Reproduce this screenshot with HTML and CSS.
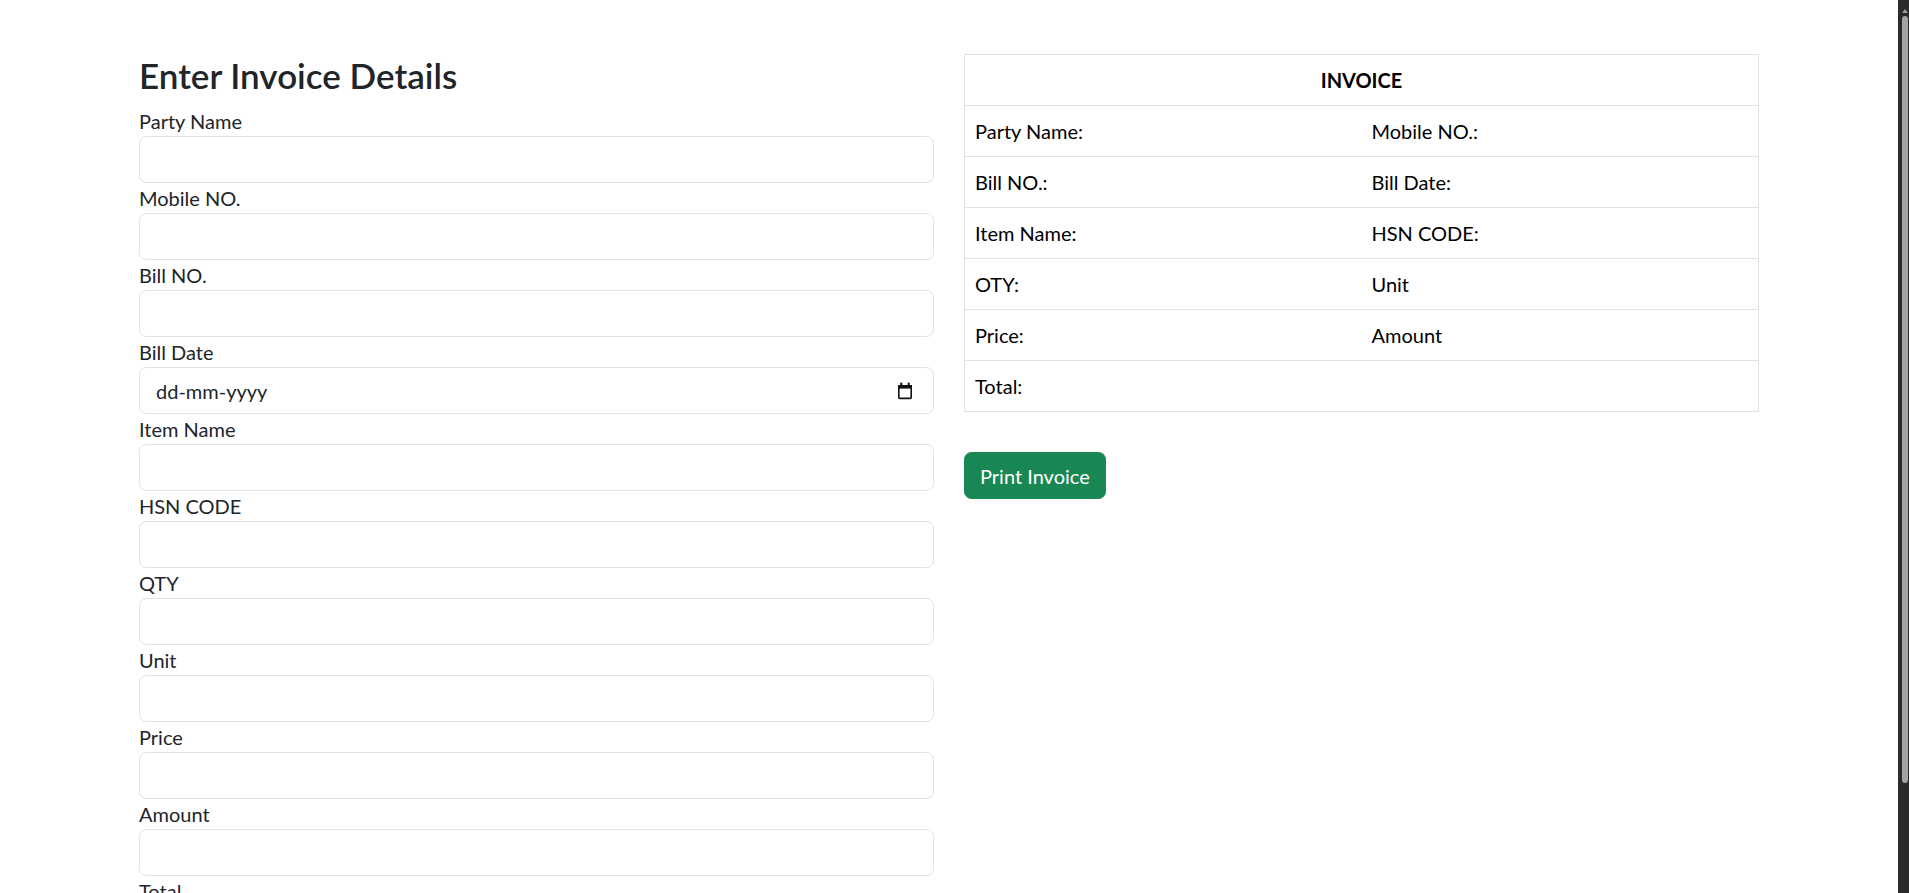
FILE: index.html
```html
<!DOCTYPE html>
<html lang="en">
<head>
<meta charset="utf-8">
<title>Invoice</title>
<link rel="stylesheet" href="styles.css">
</head>
<body>
<div class="viewport">
  <div class="page">
    <div class="row">
      <div class="col">
        <h3 class="title">Enter Invoice Details</h3>
        <form class="form">
          <label class="form-label">Party Name</label>
          <input class="form-control" type="text">
          <label class="form-label">Mobile NO.</label>
          <input class="form-control" type="text">
          <label class="form-label">Bill NO.</label>
          <input class="form-control" type="text">
          <label class="form-label">Bill Date</label>
          <div class="form-control date-control">
            <span class="date-text">dd-mm-yyyy</span>
            <svg class="cal-icon" width="16" height="18" viewBox="0 0 16 18">
              <rect x="1.8" y="3.8" width="12.4" height="12.6" rx="1" fill="none" stroke="#111" stroke-width="1.6"/>
              <rect x="1" y="3" width="14" height="3.6" fill="#111"/>
              <rect x="3.3" y="0.6" width="2" height="3" fill="#111"/>
              <rect x="10.7" y="0.6" width="2" height="3" fill="#111"/>
            </svg>
          </div>
          <label class="form-label">Item Name</label>
          <input class="form-control" type="text">
          <label class="form-label">HSN CODE</label>
          <input class="form-control" type="text">
          <label class="form-label">QTY</label>
          <input class="form-control" type="text">
          <label class="form-label">Unit</label>
          <input class="form-control" type="text">
          <label class="form-label">Price</label>
          <input class="form-control" type="text">
          <label class="form-label">Amount</label>
          <input class="form-control" type="text">
          <label class="form-label">Total</label>
          <input class="form-control" type="text">
        </form>
      </div>
      <div class="col">
        <table class="invoice">
          <thead>
            <tr><th colspan="2">INVOICE</th></tr>
          </thead>
          <tbody>
            <tr><td>Party Name:</td><td>Mobile NO.:</td></tr>
            <tr><td>Bill NO.:</td><td>Bill Date:</td></tr>
            <tr><td>Item Name:</td><td>HSN CODE:</td></tr>
            <tr><td>OTY:</td><td>Unit</td></tr>
            <tr><td>Price:</td><td>Amount</td></tr>
            <tr><td>Total:</td><td></td></tr>
          </tbody>
        </table>
        <button class="btn-print" type="button">Print Invoice</button>
      </div>
    </div>
  </div>
</div>
<div class="scrollbar">
  <div class="scroll-arrow"></div>
  <div class="scroll-thumb"></div>
</div>
</body>
</html>
```

FILE: styles.css
```css
html, body {
  margin: 0;
  padding: 0;
  height: 100%;
  overflow: hidden;
}

body {
  display: flex;
  font-family: "Lato", "Liberation Sans", sans-serif;
  font-size: 20px;
  line-height: 30px;
  color: #212529;
  background: #ffffff;
}

.viewport {
  flex: 1;
  min-width: 0;
  overflow: hidden;
}

.page {
  width: 1620px;
  margin: 0 auto;
  padding-top: 54px;
}

.row {
  display: grid;
  grid-template-columns: 795px 795px;
  column-gap: 30px;
  align-items: start;
}

.title {
  margin: 0 0 10px;
  font-size: 35px;
  line-height: 42px;
  font-weight: 600;
  color: #212529;
}

.form {
  display: flex;
  flex-direction: column;
}

.form-label {
  display: block;
  height: 30px;
  line-height: 30px;
}

.form-control {
  box-sizing: border-box;
  display: block;
  width: 100%;
  height: 47px;
  margin: 0;
  padding: 0 16px;
  border: 1px solid #dee2e6;
  border-radius: 7.5px;
  background: #fff;
  font: inherit;
  color: #212529;
  outline: none;
}

.date-control {
  display: flex;
  align-items: center;
  justify-content: space-between;
  padding-right: 20px;
}

.date-text {
  color: #212529;
}

.cal-icon {
  display: block;
}

.invoice {
  width: 100%;
  border-collapse: collapse;
  table-layout: fixed;
  border: 1px solid #dee2e6;
  color: #000;
}

.invoice th,
.invoice td {
  border: 1px solid #dee2e6;
  border-left: none;
  border-right: none;
  padding: 10px 10px;
  height: 30px;
  line-height: 30px;
  text-align: left;
  font-weight: 400;
}

.invoice th {
  text-align: center;
  font-weight: 700;
}

.btn-print {
  display: block;
  margin-top: 40px;
  height: 47px;
  padding: 0 15px;
  border: 1px solid #198754;
  border-radius: 7.5px;
  background: #198754;
  color: #fff;
  font: inherit;
  cursor: pointer;
}

.scrollbar {
  width: 11px;
  flex: 0 0 11px;
  background: #2b2b2b;
  display: flex;
  flex-direction: column;
  align-items: flex-end;
}

.scroll-arrow {
  margin: 9px 1px 0 0;
  width: 0;
  height: 0;
  border-left: 3px solid transparent;
  border-right: 3px solid transparent;
  border-bottom: 4px solid #9e9e9e;
}

.scroll-thumb {
  margin: 3px 1px 0 0;
  width: 6px;
  height: 767px;
  border-radius: 3px;
  background: #a3a3a3;
}
```
